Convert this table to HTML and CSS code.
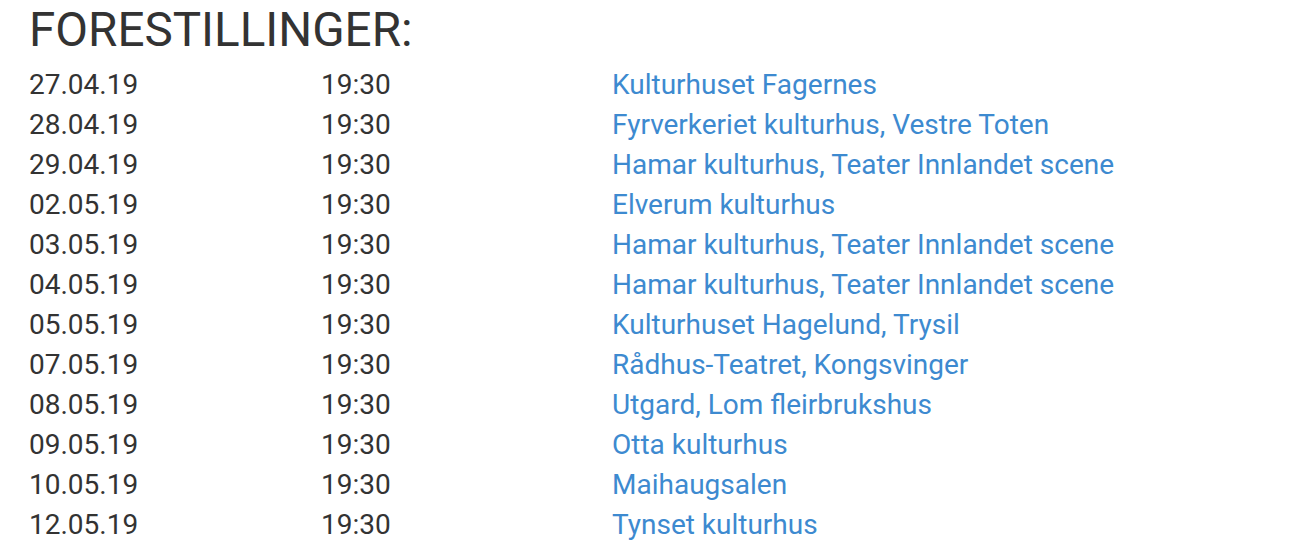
FILE: index.html
```html
<!DOCTYPE html>
<html lang="no">
<head>
<meta charset="utf-8">
<title>Forestillinger</title>
<link rel="stylesheet" href="styles.css">
</head>
<body>
<section class="shows">
  <h2 class="shows-title">FORESTILLINGER:</h2>
  <ul class="show-list">
    <li class="show"><span class="date">27.04.19</span><span class="time">19:30</span><a class="venue" href="#">Kulturhuset Fagernes</a></li>
    <li class="show"><span class="date">28.04.19</span><span class="time">19:30</span><a class="venue" href="#">Fyrverkeriet kulturhus, Vestre Toten</a></li>
    <li class="show"><span class="date">29.04.19</span><span class="time">19:30</span><a class="venue" href="#">Hamar kulturhus, Teater Innlandet scene</a></li>
    <li class="show"><span class="date">02.05.19</span><span class="time">19:30</span><a class="venue" href="#">Elverum kulturhus</a></li>
    <li class="show"><span class="date">03.05.19</span><span class="time">19:30</span><a class="venue" href="#">Hamar kulturhus, Teater Innlandet scene</a></li>
    <li class="show"><span class="date">04.05.19</span><span class="time">19:30</span><a class="venue" href="#">Hamar kulturhus, Teater Innlandet scene</a></li>
    <li class="show"><span class="date">05.05.19</span><span class="time">19:30</span><a class="venue" href="#">Kulturhuset Hagelund, Trysil</a></li>
    <li class="show"><span class="date">07.05.19</span><span class="time">19:30</span><a class="venue" href="#">Rådhus-Teatret, Kongsvinger</a></li>
    <li class="show"><span class="date">08.05.19</span><span class="time">19:30</span><a class="venue" href="#">Utgard, Lom fleirbrukshus</a></li>
    <li class="show"><span class="date">09.05.19</span><span class="time">19:30</span><a class="venue" href="#">Otta kulturhus</a></li>
    <li class="show"><span class="date">10.05.19</span><span class="time">19:30</span><a class="venue" href="#">Maihaugsalen</a></li>
    <li class="show"><span class="date">12.05.19</span><span class="time">19:30</span><a class="venue" href="#">Tynset kulturhus</a></li>
  </ul>
</section>
</body>
</html>
```

FILE: styles.css
```css
html, body {
  margin: 0;
  padding: 0;
  background: #ffffff;
}
body {
  font-family: Roboto, "Noto Sans", sans-serif;
  color: #333333;
}
.shows {
  padding: 2px 0 0 29px;
}
.shows-title {
  margin: 0 0 7px;
  font-size: 47.6px;
  font-weight: 400;
  line-height: 56px;
  color: #333333;
}
.show-list {
  list-style: none;
  margin: 0;
  padding: 0;
}
.show {
  display: grid;
  grid-template-columns: 292px 291px 1fr;
  font-size: 28px;
  line-height: 40px;
}
.venue {
  color: #3d8ad0;
  text-decoration: none;
}
```
